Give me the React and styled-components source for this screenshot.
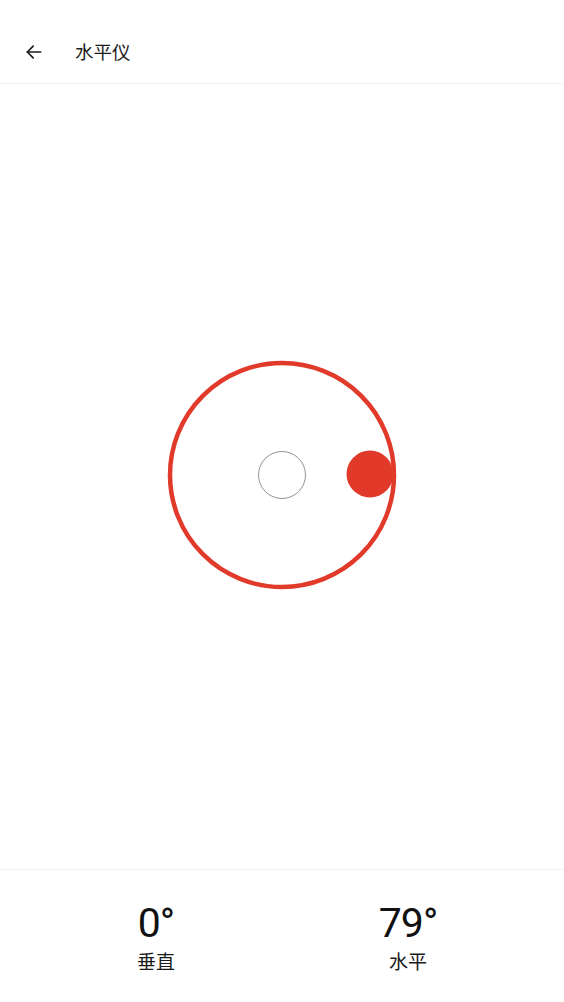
import React from 'react';
import styled, { createGlobalStyle } from 'styled-components';

const GlobalStyle = createGlobalStyle`
  html, body {
    margin: 0;
    padding: 0;
    background: #ffffff;
  }
  body {
    font-family: "Noto Sans", "Noto Sans CJK SC", sans-serif;
    color: #111;
  }
`;

const Page = styled.div`
  display: flex;
  flex-direction: column;
  height: 1002px;
  background: #ffffff;
`;

const Header = styled.header`
  display: flex;
  align-items: center;
  height: 63px;
  padding: 20px 0 0 24px;
  border-bottom: 1px solid #f2f2f2;
  box-sizing: content-box;
`;

const BackButton = styled.button`
  display: flex;
  align-items: center;
  justify-content: center;
  width: 20px;
  height: 20px;
  padding: 0;
  margin: 0 31px 0 0;
  border: none;
  background: none;
  cursor: pointer;
`;

const Title = styled.h1`
  margin: 0;
  font-size: 18.5px;
  font-weight: 400;
  color: #1a1a1a;
  line-height: 24px;
`;

const Stage = styled.main`
  flex: 1;
  display: flex;
  align-items: center;
  justify-content: center;
`;

const Dial = styled.svg`
  display: block;
  margin-bottom: 3px;
`;

const Footer = styled.footer`
  display: grid;
  grid-template-columns: 1fr 1fr;
  height: 133px;
  padding: 28px 30px 0;
  border-top: 1px solid #f2f2f2;
  box-sizing: border-box;
`;

const Reading = styled.div`
  display: flex;
  flex-direction: column;
  align-items: center;
`;

const Value = styled.div`
  font-family: Roboto, "Noto Sans", sans-serif;
  font-size: 41px;
  line-height: 50px;
  font-weight: 400;
  letter-spacing: -1px;
  color: #111;
`;

const Label = styled.div`
  margin-top: 1.5px;
  font-family: "Noto Sans CJK SC", sans-serif;
  font-size: 19px;
  line-height: 22px;
  color: #1a1a1a;
`;

function BackArrow() {
  return (
    <svg width="20" height="20" viewBox="0 0 24 24" fill="none" stroke="#1a1a1a" strokeWidth="2" strokeLinecap="round" strokeLinejoin="round">
      <path d="M20 12H4" />
      <path d="M11 5l-7 7 7 7" />
    </svg>
  );
}

function Level({ offsetX = 0, offsetY = 0 }) {
  const size = 234;
  const c = size / 2;
  return (
    <Dial width={size} height={size} viewBox={`0 0 ${size} ${size}`}>
      <circle cx={c} cy={c} r={112} fill="none" stroke="#e13a2b" strokeWidth="4.5" />
      <circle cx={c} cy={c} r={23.5} fill="none" stroke="#777" strokeWidth="0.8" />
      <circle cx={c + offsetX} cy={c + offsetY} r={23.5} fill="#e13a2b" />
    </Dial>
  );
}

export default function App() {
  return (
    <>
      <GlobalStyle />
      <Page>
        <Header>
          <BackButton aria-label="返回">
            <BackArrow />
          </BackButton>
          <Title>水平仪</Title>
        </Header>
        <Stage>
          <Level offsetX={88} offsetY={-1} />
        </Stage>
        <Footer>
          <Reading>
            <Value>0°</Value>
            <Label>垂直</Label>
          </Reading>
          <Reading>
            <Value>79°</Value>
            <Label>水平</Label>
          </Reading>
        </Footer>
      </Page>
    </>
  );
}
